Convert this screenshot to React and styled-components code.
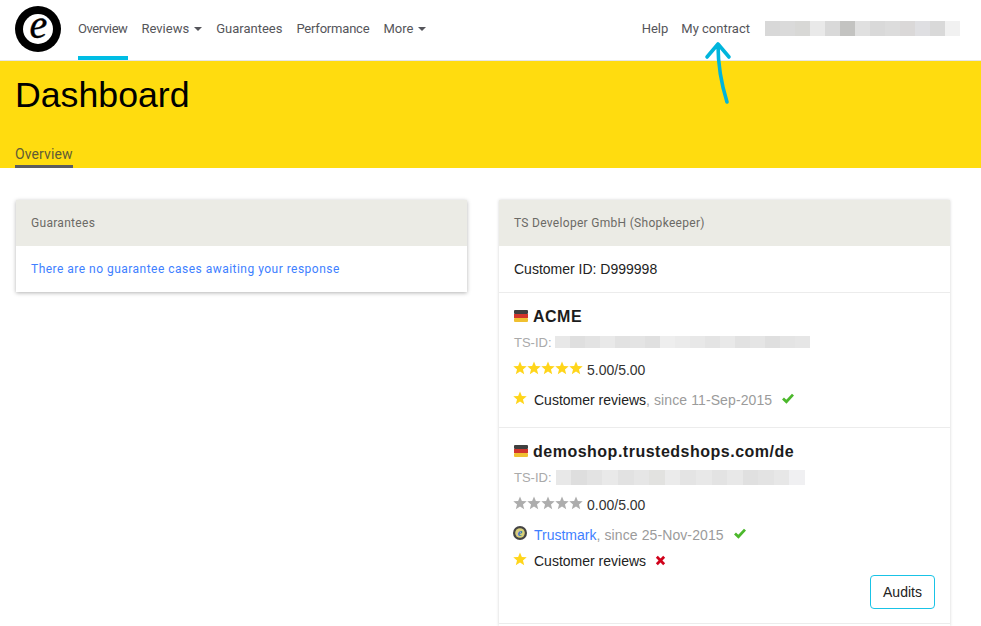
import React from "react";
import styled, { createGlobalStyle } from "styled-components";

const GlobalStyle = createGlobalStyle`
  html, body {
    margin: 0;
    height: 100%;
    overflow: hidden;
    background: #fff;
  }
  body {
    font-family: "Liberation Sans", Arial, sans-serif;
    color: #222;
  }
`;

const Header = styled.header`
  position: relative;
  display: flex;
  align-items: stretch;
  height: 60px;
  padding: 0 21px 0 15px;
  border-bottom: 1px solid #e6e6e6;
  box-sizing: content-box;
  font-family: Roboto, sans-serif;
  font-size: 13px;
  color: #55555a;
`;

const Logo = styled.svg`
  width: 46px;
  height: 46px;
  margin-top: 6px;
  margin-right: 17px;
  flex: none;
  overflow: visible;
`;

const Nav = styled.nav`
  display: flex;
  gap: 14px;
`;

const NavItem = styled.a`
  display: flex;
  align-items: center;
  gap: 5px;
  height: 60px;
  box-sizing: border-box;
  padding-top: 1px;
  letter-spacing: ${(p) => p.$squeeze || 0}px;
  border-bottom: 4px solid ${(p) => (p.$active ? "#00bde4" : "transparent")};
`;

const Caret = styled.span`
  width: 0;
  height: 0;
  border-left: 4px solid transparent;
  border-right: 4px solid transparent;
  border-top: 4px solid #55555a;
`;

const RightNav = styled(Nav)`
  margin-left: auto;
  gap: 13px;
  align-items: flex-start;
`;

const Blur = styled.div`
  display: flex;
  height: ${(p) => p.$h}px;
  flex: none;
`;

const BlurCell = styled.span`
  width: ${(p) => p.$w}px;
  background: ${(p) => p.$c};
`;

const UserBlur = styled(Blur)`
  margin: 21px 0 0 2px;
`;

const Arrow = styled.svg`
  position: absolute;
  left: 700px;
  top: 38px;
  width: 36px;
  height: 70px;
  z-index: 2;
`;

const Banner = styled.section`
  height: 107px;
  background: #ffdc0f;
  padding: 0 15px;
  display: flex;
  flex-direction: column;
  align-items: flex-start;
`;

const Title = styled.h1`
  margin: 14px 0 0;
  font-size: 35.7px;
  line-height: 40px;
  font-weight: 400;
  color: #000;
`;

const Tab = styled.a`
  margin-top: auto;
  font-family: Roboto, sans-serif;
  font-size: 14px;
  line-height: 19px;
  letter-spacing: 0.1px;
  color: #5f5c36;
  border-bottom: 3px solid #5c5c5c;
  padding-bottom: 1px;
`;

const Columns = styled.main`
  display: grid;
  grid-template-columns: 451px 451px;
  gap: 32px;
  padding: 32px 0 0 16px;
  align-items: start;
`;

const Panel = styled.div`
  background: #fff;
  box-shadow: ${(p) =>
    p.$flat ? "0 0 3px rgba(0, 0, 0, 0.18)" : "0 1px 4px rgba(0, 0, 0, 0.3)"};
`;

const PanelHead = styled.div`
  display: flex;
  align-items: center;
  height: 46px;
  padding: 0 15px;
  background: #ebebe5;
  font-family: Roboto, sans-serif;
  font-size: 12px;
  letter-spacing: 0.3px;
  color: #6b6a66;
`;

const PanelBody = styled.div`
  display: flex;
  align-items: center;
  height: 46px;
  padding: 0 15px 1px;
  box-sizing: border-box;
  font-family: Roboto, sans-serif;
  font-size: 12px;
  letter-spacing: 0.48px;
  color: #4080ff;
`;

const CustomerRow = styled.div`
  display: flex;
  align-items: center;
  height: 46px;
  padding: 0 15px;
  font-size: 14px;
  color: #222;
`;

const Shop = styled.section`
  display: flex;
  flex-direction: column;
  border-top: 1px solid #ececec;
  padding: 14px 15px 0;
  height: ${(p) => p.$h}px;
  box-sizing: border-box;
`;

const ShopEdge = styled.div`
  height: 3px;
  box-sizing: border-box;
  border-top: 1px solid #ececec;
`;

const ShopName = styled.h3`
  display: flex;
  align-items: center;
  gap: 5px;
  margin: 0;
  height: 20px;
  font-size: 16px;
  font-weight: 700;
  letter-spacing: 0.5px;
  color: #1c1c1c;
`;

const Flag = styled.svg`
  width: 14px;
  height: 12px;
  flex: none;
  margin-top: -2px;
`;

const IdRow = styled.div`
  display: flex;
  align-items: center;
  margin-top: 6px;
  height: 18px;
  font-size: 13px;
  color: #aaa;
`;

const IdBlur = styled(Blur)`
  margin-left: ${(p) => p.$left || 0}px;
`;

const RatingRow = styled.div`
  display: flex;
  align-items: center;
  gap: 4px;
  margin-top: 10px;
  height: 18px;
  font-size: 14px;
  color: #333;
`;

const Stars = styled.span`
  display: flex;
  margin: -5px 0 0 -1px;
`;

const Star = styled.svg`
  width: ${(p) => p.$size}px;
  height: ${(p) => p.$size}px;
  fill: ${(p) => p.$fill};
  flex: none;
`;

const StatusRow = styled.div`
  display: flex;
  align-items: center;
  height: 18px;
  margin-top: ${(p) => p.$top}px;
  font-size: 14px;
  color: #222;
`;

const StatusIcon = styled.span`
  display: flex;
  width: 21px;
  margin: -5px 0 0 -1px;
  flex: none;
`;

const Since = styled.span`
  color: #9b9b9b;
  letter-spacing: 0.1px;
`;

const Link = styled.a`
  color: #3f7fff;
`;

const Mark = styled.svg`
  width: ${(p) => p.$size}px;
  height: ${(p) => p.$size}px;
  margin-left: ${(p) => p.$left}px;
  margin-top: ${(p) => p.$top}px;
  flex: none;
`;

const AuditsButton = styled.button`
  align-self: flex-end;
  width: 65px;
  height: 34px;
  margin-top: 5px;
  background: #fff;
  border: 1px solid #19c3e6;
  border-radius: 4px;
  padding: 0;
  font-family: "Liberation Sans", Arial, sans-serif;
  font-size: 14px;
  color: #222;
`;

const userShades = ["#d8d8d8", "#dadada", "#d8d8d6", "#e9e9e9", "#d9d9d9", "#c3c3c1", "#e0e0e0", "#d9d9d9", "#dcdcdc", "#dad8d8", "#dfdfe2", "#d9d9d9", "#f1f1f1"];
const acmeShades = ["#e8e8e8", "#dfdfdf", "#e3e3e3", "#e9e9e9", "#e2e2e2", "#e4e4e4", "#e0e0e0", "#eeeeee", "#ebebeb", "#e8e8e8", "#e4e4e4", "#e9e9e9", "#e2e2e2", "#e5e5e5", "#dfdfdf", "#e4e4e4", "#e6e6e6"];
const demoShades = ["#e8e8e8", "#dedede", "#e3e3e3", "#e9e9e9", "#e2e2e2", "#e6e6e6", "#e2e2e0", "#ebebeb", "#e4e4e4", "#e8e8e8", "#e3e3e3", "#e8e8e8", "#e0e0e0", "#e3e3e3", "#e7e7e7", "#f0f0f2"];

const BlurBar = ({ as: Comp = Blur, shades, h, left, cell = 15 }) => (
  <Comp $h={h} $left={left}>
    {shades.map((c, i) => (
      <BlurCell key={i} $w={cell} $c={c} />
    ))}
  </Comp>
);

const StarIcon = ({ size, fill }) => (
  <Star viewBox="0 0 24 24" $size={size} $fill={fill}>
    <path d="M12 1l3.2 7.6 8.3.6-6.4 5.3 2.1 8.1L12 18.2l-7.2 4.4 2.1-8.1L.5 9.2l8.3-.6z" />
  </Star>
);

const GermanFlag = () => (
  <Flag viewBox="0 0 14 12">
    <rect width="14" height="4" rx="1" fill="#3f3f3f" />
    <rect y="4" width="14" height="4" fill="#d2352c" />
    <rect y="8" width="14" height="4" rx="1" fill="#f0c030" />
  </Flag>
);

const Check = () => (
  <Mark viewBox="0 0 12 12" $left={10} $size={12} $top={-4}>
    <path d="M1 6.5l3.4 3.2L11 2.6" fill="none" stroke="#4cb82c" strokeWidth="2.8" />
  </Mark>
);

const Cross = () => (
  <Mark viewBox="0 0 12 12" $left={9} $size={11} $top={-1}>
    <path d="M2 2l8 8M10 2l-8 8" fill="none" stroke="#d0021b" strokeWidth="3" />
  </Mark>
);

const Seal = () => (
  <svg width="14" height="14" viewBox="0 0 14 14">
    <circle cx="7" cy="7" r="7" fill="#444" />
    <circle cx="7" cy="7" r="4.8" fill="#d9d07a" />
    <text x="7" y="10" textAnchor="middle" fontSize="10" fontStyle="italic" fontWeight="700" fontFamily="Liberation Serif, serif" fill="#2b6fd0">e</text>
  </svg>
);

function App() {
  return (
    <>
      <GlobalStyle />
      <Header>
        <Logo viewBox="0 0 46 46">
          <circle cx="23" cy="23" r="23" fill="#000" />
          <circle cx="23" cy="23" r="15" fill="#fff" />
          <text x="23.5" y="32" textAnchor="middle" fontSize="40" fontStyle="italic" fontFamily="Liberation Serif, serif" stroke="#000" strokeWidth="0.4" fill="#000">e</text>
        </Logo>
        <Nav>
          <NavItem $active $squeeze={-0.4}>Overview</NavItem>
          <NavItem>Reviews <Caret /></NavItem>
          <NavItem>Guarantees</NavItem>
          <NavItem $squeeze={-0.2}>Performance</NavItem>
          <NavItem>More <Caret /></NavItem>
        </Nav>
        <RightNav>
          <NavItem>Help</NavItem>
          <NavItem>My contract</NavItem>
          <BlurBar as={UserBlur} shades={userShades} h={15} />
        </RightNav>
        <Arrow viewBox="0 0 36 70">
          <path d="M27 64C22 48 18 30 18 7M7 19L18 6l11 13" fill="none" stroke="#00b5dc" strokeWidth="3.6" strokeLinecap="round" strokeLinejoin="round" />
        </Arrow>
      </Header>
      <Banner>
        <Title>Dashboard</Title>
        <Tab>Overview</Tab>
      </Banner>
      <Columns>
        <Panel>
          <PanelHead>Guarantees</PanelHead>
          <PanelBody>There are no guarantee cases awaiting your response</PanelBody>
        </Panel>
        <Panel $flat>
          <PanelHead>TS Developer GmbH (Shopkeeper)</PanelHead>
          <CustomerRow>Customer ID: D999998</CustomerRow>
          <Shop $h={135}>
            <ShopName><GermanFlag />ACME</ShopName>
            <IdRow>TS-ID:<BlurBar as={IdBlur} shades={acmeShades} h={12} left={3} /></IdRow>
            <RatingRow>
              <Stars>{[0, 1, 2, 3, 4].map((i) => <StarIcon key={i} size={14} fill="#ffd51a" />)}</Stars>
              5.00/5.00
            </RatingRow>
            <StatusRow $top={12}>
              <StatusIcon><StarIcon size={14} fill="#ffd51a" /></StatusIcon>
              Customer reviews<Since>, since 11-Sep-2015</Since>
              <Check />
            </StatusRow>
          </Shop>
          <Shop $h={196}>
            <ShopName><GermanFlag />demoshop.trustedshops.com/de</ShopName>
            <IdRow>TS-ID:<BlurBar as={IdBlur} shades={demoShades} h={15} left={4} cell={15.6} /></IdRow>
            <RatingRow>
              <Stars>{[0, 1, 2, 3, 4].map((i) => <StarIcon key={i} size={14} fill="#adadad" />)}</Stars>
              0.00/5.00
            </RatingRow>
            <StatusRow $top={12}>
              <StatusIcon><Seal /></StatusIcon>
              <Link>Trustmark</Link><Since>, since 25-Nov-2015</Since>
              <Check />
            </StatusRow>
            <StatusRow $top={8}>
              <StatusIcon><StarIcon size={14} fill="#ffd51a" /></StatusIcon>
              Customer reviews
              <Cross />
            </StatusRow>
            <AuditsButton>Audits</AuditsButton>
          </Shop>
          <ShopEdge />
        </Panel>
      </Columns>
    </>
  );
}

export default App;
